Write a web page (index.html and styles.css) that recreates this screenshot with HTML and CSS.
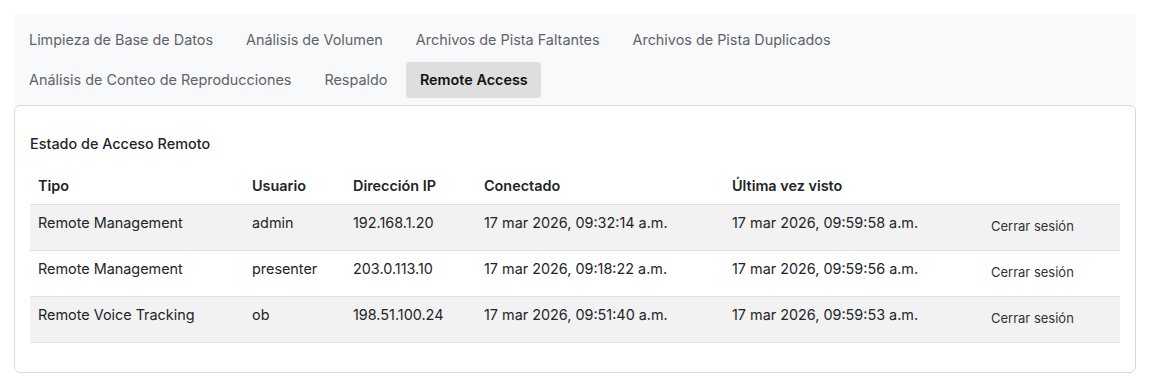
FILE: index.html
```html
<!DOCTYPE html>
<html lang="es">
<head>
<meta charset="utf-8">
<link rel="stylesheet" href="styles.css">
</head>
<body>
<div class="page">
  <nav class="tabs">
    <button class="tab">Limpieza de Base de Datos</button>
    <button class="tab">Análisis de Volumen</button>
    <button class="tab">Archivos de Pista Faltantes</button>
    <button class="tab">Archivos de Pista Duplicados</button>
    <button class="tab">Análisis de Conteo de Reproducciones</button>
    <button class="tab">Respaldo</button>
    <button class="tab active">Remote Access</button>
  </nav>
  <section class="card">
    <h2 class="title">Estado de Acceso Remoto</h2>
    <table class="sessions">
      <colgroup>
        <col class="c-tipo"><col class="c-user"><col class="c-ip"><col class="c-con"><col class="c-ult"><col>
      </colgroup>
      <thead>
        <tr><th>Tipo</th><th>Usuario</th><th>Dirección IP</th><th>Conectado</th><th>Última vez visto</th><th></th></tr>
      </thead>
      <tbody>
        <tr><td>Remote Management</td><td>admin</td><td>192.168.1.20</td><td>17 mar 2026, 09:32:14 a.m.</td><td>17 mar 2026, 09:59:58 a.m.</td><td><button class="logout">Cerrar sesión</button></td></tr>
        <tr><td>Remote Management</td><td>presenter</td><td>203.0.113.10</td><td>17 mar 2026, 09:18:22 a.m.</td><td>17 mar 2026, 09:59:56 a.m.</td><td><button class="logout">Cerrar sesión</button></td></tr>
        <tr><td>Remote Voice Tracking</td><td>ob</td><td>198.51.100.24</td><td>17 mar 2026, 09:51:40 a.m.</td><td>17 mar 2026, 09:59:53 a.m.</td><td><button class="logout">Cerrar sesión</button></td></tr>
      </tbody>
    </table>
  </section>
</div>
</body>
</html>
```

FILE: styles.css
```css
* { box-sizing: border-box; }
html, body { margin: 0; background: #ffffff; }
body {
  font-family: Inter, "Noto Sans", sans-serif;
  color: #212529;
  font-size: 14.4px;
  line-height: 20px;
}
.page { padding: 14px 14px 0 14px; }
.tabs {
  display: flex;
  flex-wrap: wrap;
  gap: 4px 5px;
  background: #f8f9fa;
  padding: 8px 1px 7px 1px;
}
.tab {
  font: inherit;
  font-size: 14.4px;
  line-height: 20px;
  color: #5f6368;
  background: transparent;
  border: 0;
  border-radius: 4px;
  padding: 8px 14px;
  height: 36px;
  cursor: pointer;
}
.tab.active {
  background: #dedede;
  color: #111;
  font-weight: 600;
  padding: 8px 13.5px;
}
.card {
  border: 1px solid #d9d9d9;
  border-radius: 6px;
  padding: 28px 15px 29px 15px;
}
.title {
  margin: 0 0 14px 0;
  font-size: 14.4px;
  line-height: 20px;
  font-weight: 500;
  color: #212529;
}
.sessions {
  width: 100%;
  border-collapse: collapse;
  table-layout: fixed;
}
.c-tipo { width: 214px; }
.c-user { width: 101px; }
.c-ip { width: 131px; }
.c-con { width: 248px; }
.c-ult { width: 251px; }
.sessions th {
  text-align: left;
  font-weight: 600;
  padding: 8px 8px;
  border-bottom: 1px solid #dee2e6;
}
.sessions td {
  vertical-align: top;
  padding: 8px 8px 9px 8px;
  border-bottom: 1px solid #dee2e6;
}
.sessions tbody tr:nth-child(odd) td { background: #f2f2f2; }
.logout {
  font: inherit;
  font-size: 13px;
  line-height: 16px;
  color: #333;
  background: transparent;
  border: 0;
  padding: 5px 8px 7px 8px;
  cursor: pointer;
}
```
